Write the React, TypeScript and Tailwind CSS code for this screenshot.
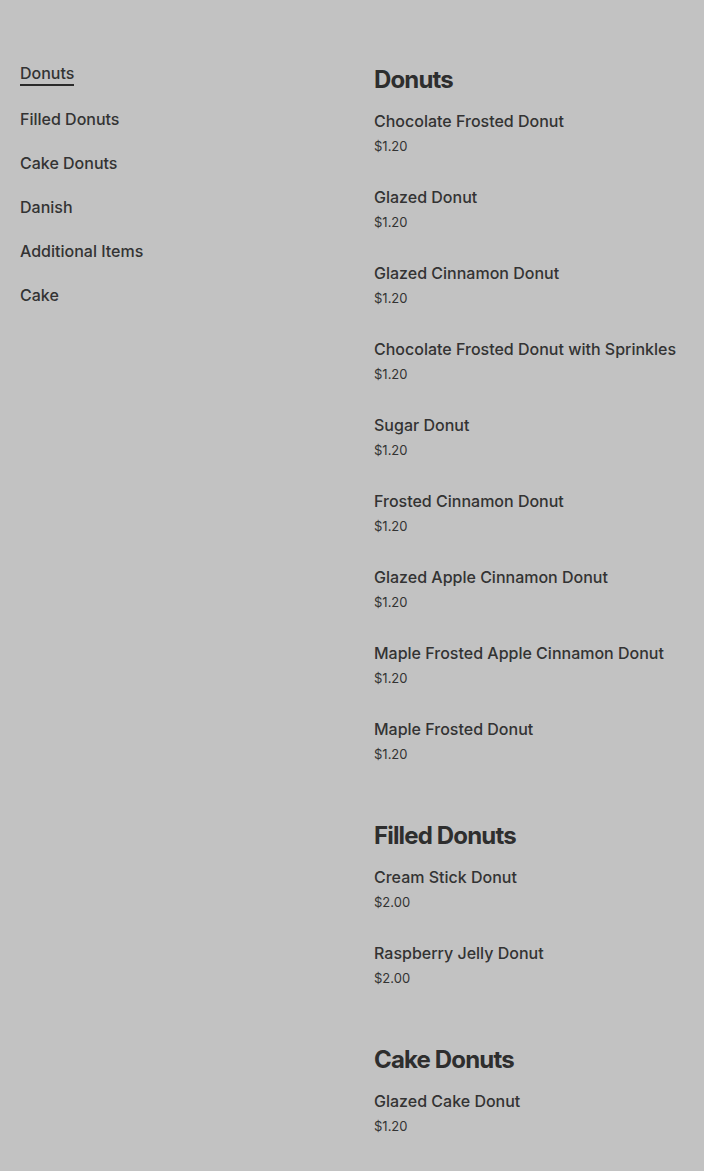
type MenuItem = {
  name: string
  price: string
}

type MenuSection = {
  title: string
  items: MenuItem[]
}

const sections: MenuSection[] = [
  {
    title: "Donuts",
    items: [
      { name: "Chocolate Frosted Donut", price: "$1.20" },
      { name: "Glazed Donut", price: "$1.20" },
      { name: "Glazed Cinnamon Donut", price: "$1.20" },
      { name: "Chocolate Frosted Donut with Sprinkles", price: "$1.20" },
      { name: "Sugar Donut", price: "$1.20" },
      { name: "Frosted Cinnamon Donut", price: "$1.20" },
      { name: "Glazed Apple Cinnamon Donut", price: "$1.20" },
      { name: "Maple Frosted Apple Cinnamon Donut", price: "$1.20" },
      { name: "Maple Frosted Donut", price: "$1.20" },
    ],
  },
  {
    title: "Filled Donuts",
    items: [
      { name: "Cream Stick Donut", price: "$2.00" },
      { name: "Raspberry Jelly Donut", price: "$2.00" },
    ],
  },
  {
    title: "Cake Donuts",
    items: [
      { name: "Glazed Cake Donut", price: "$1.20" },
      { name: "Chocolate Glazed Cake Donut", price: "$1.20" },
      { name: "Blueberry Cake Donut", price: "$1.20" },
    ],
  },
]

const navItems = ["Donuts", "Filled Donuts", "Cake Donuts", "Danish", "Additional Items", "Cake"]

export default function App() {
  return (
    <div
      className="min-h-screen bg-[#c2c2c2] text-[#333333]"
      style={{ fontFamily: "Inter, 'Noto Sans', sans-serif" }}
    >
      <div className="grid grid-cols-[374px_1fr] pt-[61px]">
        {/* Category nav */}
        <nav className="flex flex-col gap-[20px] pl-5">
          {navItems.map((item, i) => (
            <div
              key={item}
              className={`text-base leading-6 font-medium ${i === 0 ? "h-[26px]" : "h-6"}`}
            >
              {i === 0 ? (
                <span className="inline-block border-b-2 border-[#2a2a2a] leading-[22px]">
                  {item}
                </span>
              ) : (
                <span>{item}</span>
              )}
            </div>
          ))}
        </nav>

        {/* Menu */}
        <main className="flex flex-col gap-[24px]">
          {sections.map((section) => (
            <section key={section.title}>
              <h2 className="mt-[3px] text-2xl leading-8 font-bold tracking-[-0.035em] text-[#2e2e2e]">
                {section.title}
              </h2>
              <ul className="mt-[13px]">
                {section.items.map((item) => (
                  <li key={item.name} className="pb-[29px]">
                    <p className="text-base leading-6 font-medium">{item.name}</p>
                    <p className="mt-[3px] text-[13px] leading-5">{item.price}</p>
                  </li>
                ))}
              </ul>
            </section>
          ))}
        </main>
      </div>
    </div>
  )
}
